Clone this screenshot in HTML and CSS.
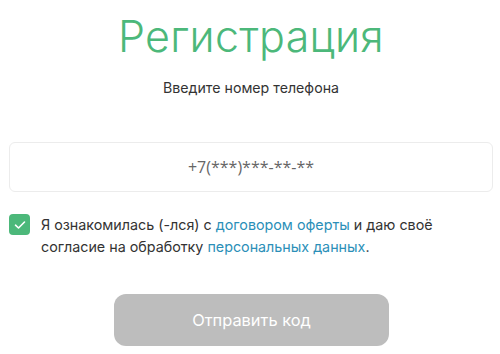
FILE: index.html
```html
<!DOCTYPE html>
<html lang="ru">
<head>
<meta charset="utf-8">
<link rel="stylesheet" href="styles.css">
</head>
<body>
<main class="page">
  <h1 class="title">Регистрация</h1>
  <p class="subtitle">Введите номер телефона</p>
  <div class="phone">+7(***)***-**-**</div>
  <div class="agree">
    <span class="check">
      <svg width="12" height="10" viewBox="0 0 12 10"><path d="M1.5 5.2 L4.5 8 L10.5 2" fill="none" stroke="#fff" stroke-width="1.6" stroke-linecap="round" stroke-linejoin="round"/></svg>
    </span>
    <p class="agree-text">Я ознакомилась (-лся) с <a class="link">договором оферты</a> и даю своё согласие на обработку <a class="link">персональных данных</a>.</p>
  </div>
  <div class="actions"><button class="submit">Отправить код</button></div>
</main>
</body>
</html>
```
FILE: styles.css
```css
html, body {
  margin: 0;
  padding: 0;
  background: #fff;
}
.page {
  width: 500px;
  height: 354px;
  box-sizing: border-box;
  padding: 0 7px 0 9px;
  font-family: Inter, "Noto Sans", sans-serif;
  overflow: hidden;
}
.title {
  margin: 0;
  padding-top: 10px;
  text-align: center;
  font-weight: 300;
  font-size: 43px;
  line-height: 52px;
  color: #4cb87a;
  letter-spacing: 0.3px;
}
.subtitle {
  margin: 17px 0 0;
  text-align: center;
  font-size: 14.2px;
  line-height: 18px;
  color: #333;
}
.phone {
  margin-top: 45px;
  border: 1px solid #ececec;
  border-radius: 6px;
  display: flex;
  align-items: center;
  justify-content: center;
  font-family: "Open Sans", sans-serif;
  font-size: 16px;
  color: #666;
  box-sizing: border-box;
  height: 50px;
}
.agree {
  margin-top: 21px;
  display: flex;
  gap: 11px;
  align-items: flex-start;
}
.check {
  flex: none;
  width: 21px;
  height: 21px;
  margin-top: 1px;
  border-radius: 4px;
  background: #4cb87a;
  display: flex;
  align-items: center;
  justify-content: center;
}
.agree-text {
  margin: 0;
  font-size: 14.3px;
  line-height: 22px;
  padding-top: 1px;
  color: #333;
  padding-right: 50px;
}
.link {
  color: #2b8fb8;
  text-decoration: none;
}
.actions {
  margin-top: 36px;
  display: flex;
  justify-content: center;
}
.submit {
  width: 275px;
  height: 52px;
  margin-left: 1px;
  border: none;
  border-radius: 12px;
  background: #bdbdbd;
  color: #fff;
  font-family: Inter, "Noto Sans", sans-serif;
  font-size: 16.4px;
}
```
